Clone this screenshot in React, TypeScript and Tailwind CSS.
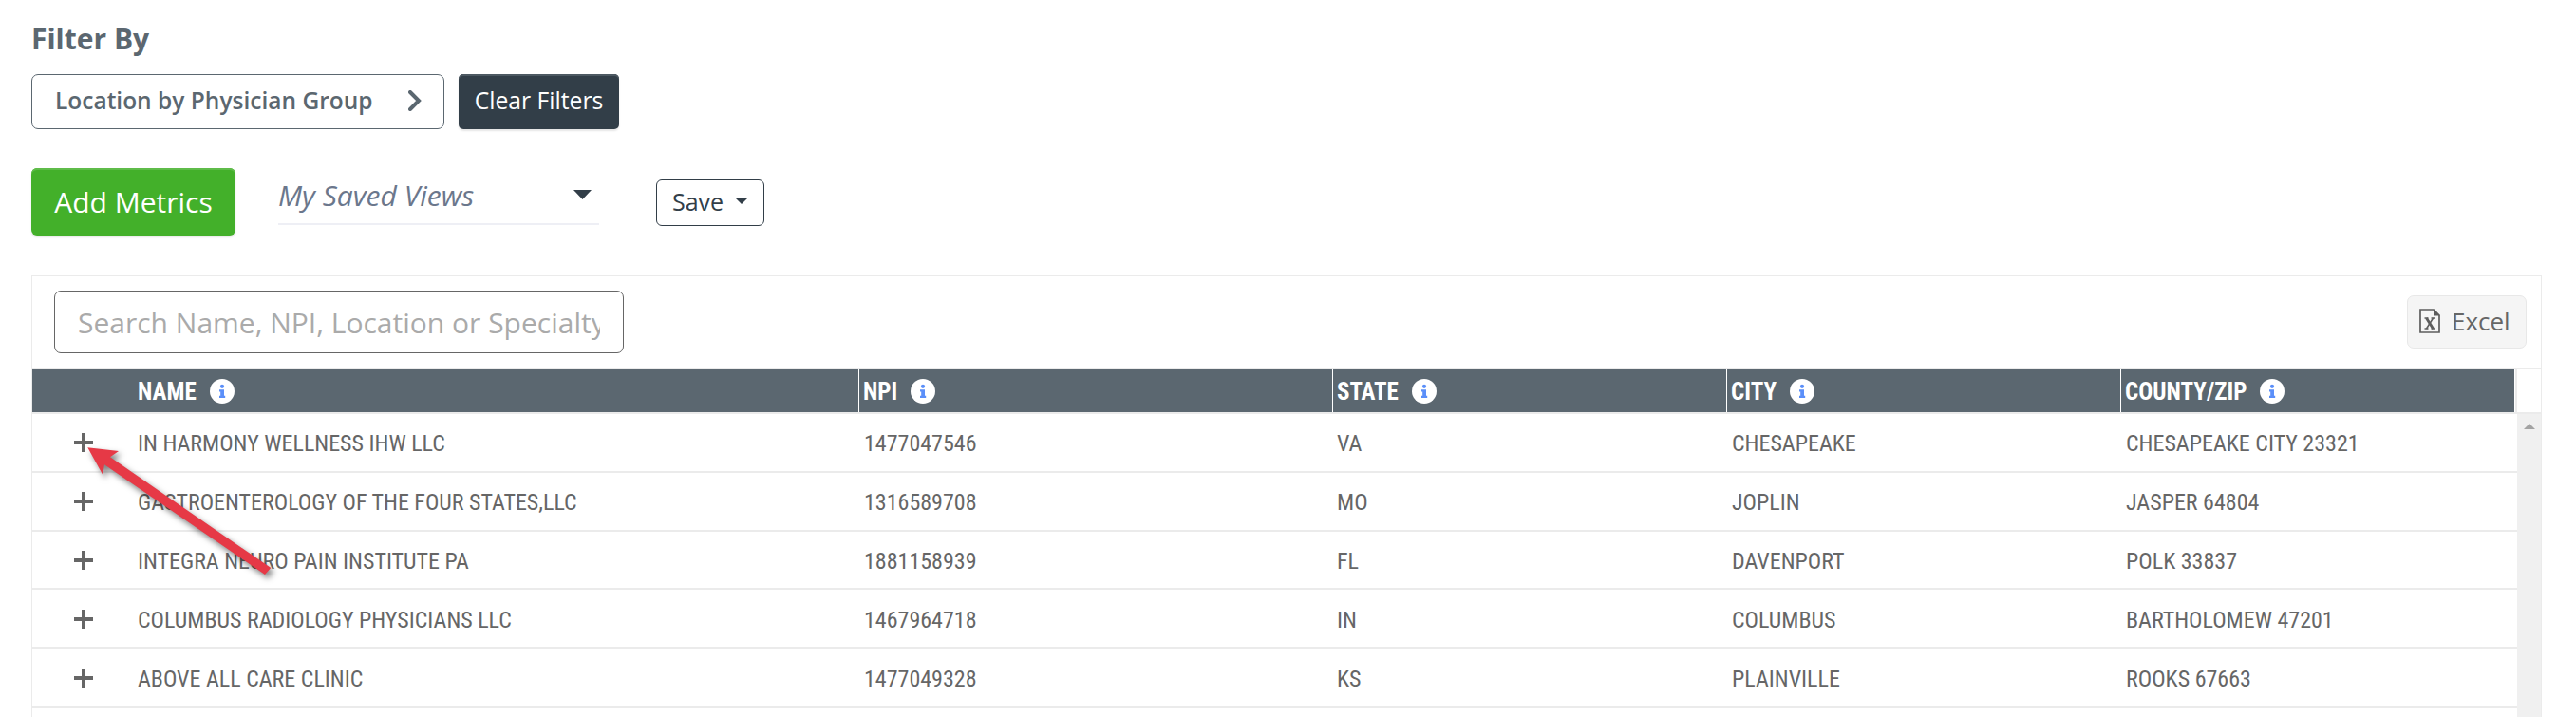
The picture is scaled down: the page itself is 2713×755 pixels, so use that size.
import type { ReactNode } from 'react';

const rows = [
  { name: 'IN HARMONY WELLNESS IHW LLC', npi: '1477047546', state: 'VA', city: 'CHESAPEAKE', county: 'CHESAPEAKE CITY 23321' },
  { name: 'GASTROENTEROLOGY OF THE FOUR STATES,LLC', npi: '1316589708', state: 'MO', city: 'JOPLIN', county: 'JASPER 64804' },
  { name: 'INTEGRA NEURO PAIN INSTITUTE PA', npi: '1881158939', state: 'FL', city: 'DAVENPORT', county: 'POLK 33837' },
  { name: 'COLUMBUS RADIOLOGY PHYSICIANS LLC', npi: '1467964718', state: 'IN', city: 'COLUMBUS', county: 'BARTHOLOMEW 47201' },
  { name: 'ABOVE ALL CARE CLINIC', npi: '1477049328', state: 'KS', city: 'PLAINVILLE', county: 'ROOKS 67663' },
];

const columns = ['NPI', 'STATE', 'CITY', 'COUNTY/ZIP'];

const grid = 'grid grid-cols-[870px_499px_415px_415px_415px]';

function InfoIcon() {
  return (
    <svg viewBox="0 0 26 26" className="h-[26px] w-[26px] shrink-0">
      <circle cx="13" cy="13" r="13" fill="#fff" />
      <circle cx="13" cy="7.8" r="2.1" fill="#5b8ff9" />
      <path d="M10 11.200h5v6.600h1.200V20H10v-2.200h1.200v-4.400H10z" fill="#5b8ff9" />
    </svg>
  );
}

function Heading({ children }: { children: ReactNode }) {
  return (
    <>
      <span className="pt-0.5">{children}</span>
      <InfoIcon />
    </>
  );
}

function PlusIcon() {
  return (
    <svg viewBox="0 0 20 20" className="mb-0.5 h-5 w-5 shrink-0">
      <path d="M0 8h8V0h4v8h8v4h-8v8H8v-8H0z" fill="#666" />
    </svg>
  );
}

function ExcelIcon() {
  return (
    <svg viewBox="0 0 22 26" className="h-[26px] w-[22px] shrink-0">
      <path d="M1 1h14l6 6v18H1z" fill="none" stroke="#5d5d5d" strokeWidth="1.7" />
      <path d="M15 0.500L21.500 7v0.500H15z" fill="#5d5d5d" />
      <path d="M5.500 10h4M12.500 10h4M5.500 21h4M12.500 21h4" stroke="#5d5d5d" strokeWidth="1.6" />
      <path d="M7.500 10l7 11" stroke="#5d5d5d" strokeWidth="2.8" />
      <path d="M14.500 10l-7 11" stroke="#5d5d5d" strokeWidth="1.6" />
    </svg>
  );
}

export default function App() {
  return (
    <div className="relative h-[755px] w-[2713px] overflow-hidden bg-white pl-[33px] pt-5 font-['Open_Sans',sans-serif]">
      <h2 className="h-[58px] text-[30px] leading-[42px] font-bold text-[#5b6770]">Filter By</h2>

      <div className="flex gap-[15px]">
        <button className="flex h-[58px] w-[435px] items-center justify-between rounded-[7px] border border-[#5b6770] pr-[23px] pb-0.5 pl-6 text-[24.5px] font-semibold text-[#5b6770]">
          Location by Physician Group
          <svg viewBox="0 0 14 22" className="h-[22px] w-[14px]">
            <path d="M2 2l9 9-9 9" fill="none" stroke="#5b6770" strokeWidth="4" strokeLinecap="round" />
          </svg>
        </button>
        <button className="flex h-[58px] w-[169px] items-center justify-center rounded-[5px] bg-[#323e48] pb-0.5 text-[24.7px] text-white shadow-[inset_0_2px_0_#4d5962,0_2px_2px_rgba(0,0,0,0.1)]">
          Clear Filters
        </button>
      </div>

      <div className="mt-[41px] flex h-[71px]">
        <button className="h-[71px] w-[215px] rounded-[6px] bg-[#43b02a] text-[30px] text-white shadow-[inset_0_2px_0_#5fbc4a,0_2px_2px_rgba(0,0,0,0.1)]">
          Add Metrics
        </button>
        <div className="ml-[45px] flex h-[60px] w-[338px] items-center justify-between border-b-2 border-[#eeeff5] pr-2 pb-0.5 text-[30px] italic text-[#6b778c]">
          My Saved Views
          <svg viewBox="0 0 19 10" className="h-2.5 w-[19px]">
            <path d="M0 0h19l-9.500 10z" fill="#323e48" />
          </svg>
        </div>
        <button className="mt-3 ml-[60px] flex h-[49px] w-[114px] items-center justify-between rounded-[6px] border border-[#323e48] px-4 pb-0.5 text-[25px] text-[#323e48]">
          Save
          <svg viewBox="0 0 14 7" className="mb-0.5 h-[7px] w-3.5">
            <path d="M0 0h14l-7 7z" fill="#323e48" />
          </svg>
        </button>
      </div>

      <div className="mt-[42px] h-[500px] w-[2644px] border border-[#ebebeb]">
        <div className="flex h-[96px] items-center justify-between pr-[15px] pl-[23px]">
          <div className="flex h-[66px] w-[600px] items-center rounded-[7px] border border-[#666] px-6">
            <span className="w-[552px] overflow-hidden text-[30px] whitespace-nowrap text-[#aaa]">Search Name, NPI, Location or Specialty</span>
          </div>
          <button className="flex h-14 w-[126px] items-center gap-3 rounded-[7px] border border-[#e8e8e8] bg-[#f5f5f5] pb-0.5 pl-3 text-[26px] text-[#666]">
            <ExcelIcon />
            Excel
          </button>
        </div>

        <div className="flex h-[49px] border-y-2 border-[#ebebeb]">
          <div className={`${grid} bg-[#5b6770] font-['Roboto_Condensed','Roboto'] text-[25px] font-bold text-white font-stretch-[75%]`}>
            <div className="flex items-center gap-[14px] pl-[111px]">
              <Heading>NAME</Heading>
            </div>
            {columns.map((c) => (
              <div key={c} className="flex items-center gap-[14px] border-l border-white pl-1">
                <Heading>{c}</Heading>
              </div>
            ))}
          </div>
          <div className="ml-px w-0.5 bg-[#ebebeb]" />
        </div>

        <div className="flex">
          <div className="w-[2617px] font-['Roboto_Condensed','Roboto'] text-[24px] text-[#666] font-stretch-[75%]">
            {rows.map((r, i) => (
              <div key={r.npi} className={`${grid} items-center border-b-2 border-[#ebebeb] ${i === 2 ? 'h-[61px]' : 'h-[62px]'} ${i > 2 ? 'pt-[3px]' : 'pt-0.5'}`}>
                <div className="flex items-center pl-11">
                  <PlusIcon />
                  <span className="pl-[47px]">{r.name}</span>
                </div>
                <span className="pl-1.5">{r.npi}</span>
                <span className="pl-[5px]">{r.state}</span>
                <span className="pl-1.5">{r.city}</span>
                <span className="pl-1.5">{r.county}</span>
              </div>
            ))}
          </div>
          <div className="h-[400px] w-[25px] bg-[#f0f0f0] pt-2.5 pl-[7px]">
            <svg viewBox="0 0 12 6" className="h-1.5 w-3">
              <path d="M6 0l6 6H0z" fill="#a3a3a3" />
            </svg>
          </div>
        </div>
      </div>

      {/* Callout pointing at the first expand button */}
      <svg viewBox="0 0 230 160" className="absolute top-[460px] left-[80px] h-[160px] w-[230px] drop-shadow-[3px_4px_3px_rgba(0,0,0,0.5)]">
        <path d="M12.300 11.300L45 15l-9 6.300L205.300 138 199 145 30 29.300 28.300 40z" fill="#e63946" />
      </svg>
    </div>
  );
}
